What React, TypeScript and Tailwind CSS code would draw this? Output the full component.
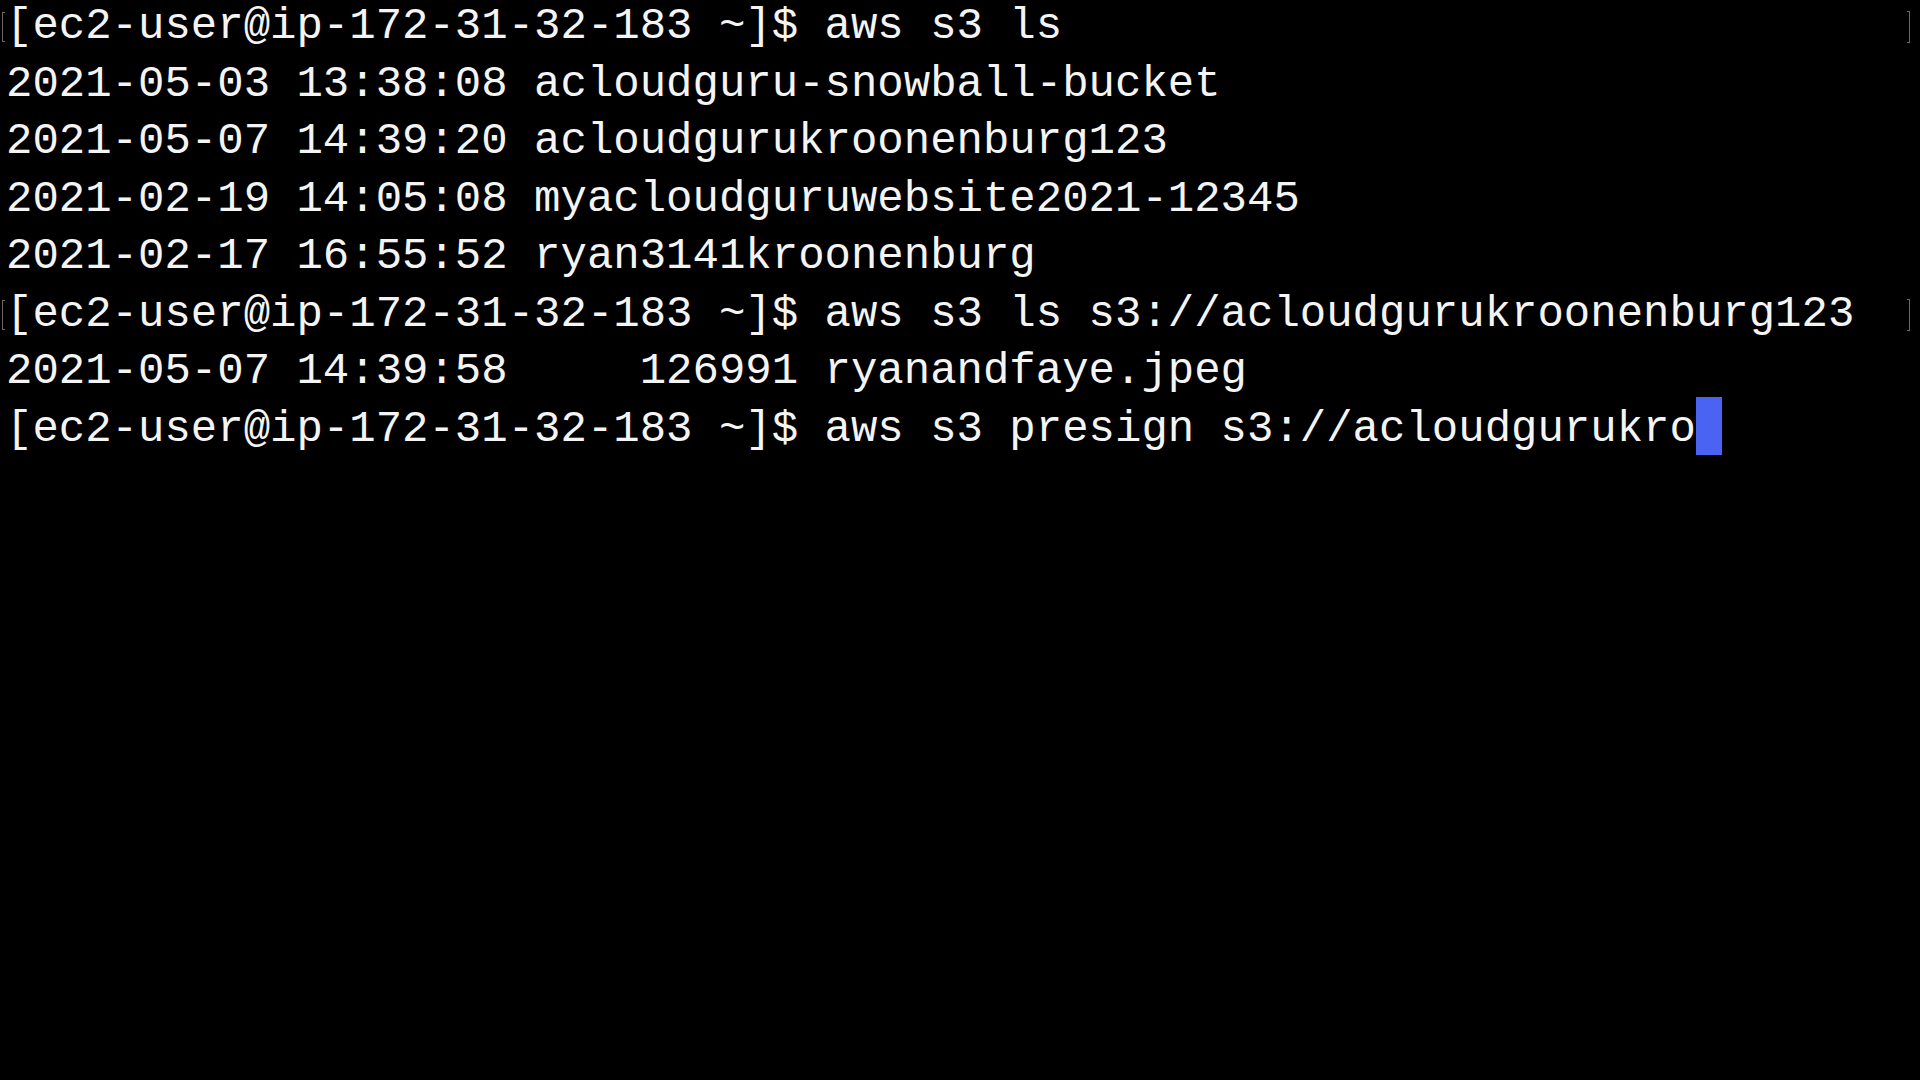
const lines: { text: string; mark?: boolean; cursor?: boolean }[] = [
  { text: "[ec2-user@ip-172-31-32-183 ~]$ aws s3 ls", mark: true },
  { text: "2021-05-03 13:38:08 acloudguru-snowball-bucket" },
  { text: "2021-05-07 14:39:20 acloudgurukroonenburg123" },
  { text: "2021-02-19 14:05:08 myacloudguruwebsite2021-12345" },
  { text: "2021-02-17 16:55:52 ryan3141kroonenburg" },
  { text: "[ec2-user@ip-172-31-32-183 ~]$ aws s3 ls s3://acloudgurukroonenburg123", mark: true },
  { text: "2021-05-07 14:39:58     126991 ryanandfaye.jpeg" },
  { text: "[ec2-user@ip-172-31-32-183 ~]$ aws s3 presign s3://acloudgurukro", cursor: true },
];

function Line({ text, mark, cursor }: { text: string; mark?: boolean; cursor?: boolean }) {
  return (
    <div className="flex h-[57.55px] items-center">
      <div className="w-[6px] shrink-0 flex items-center">
        {mark && <span className="ml-[2px] block h-[30px] w-[3px] border-y border-l border-[#6a6a6a]" />}
      </div>
      <div className="whitespace-pre leading-[57.55px]">
        {text}
        {cursor && <span className="inline-block h-[58px] w-[26px] bg-[#4b63f3] align-top -translate-y-[4px]" />}
      </div>
      <div className="ml-auto mr-[10px] flex items-center">
        {mark && <span className="block h-[32px] w-[3px] border-y border-r border-[#6a6a6a]" />}
      </div>
    </div>
  );
}

export default function App() {
  return (
    <div className="h-[1080px] w-[1920px] overflow-hidden bg-black text-[#f4f4f4] text-[44px] font-['Liberation_Mono',monospace]">
      <div className="-mt-[2px] flex flex-col">
        {lines.map((l, i) => (
          <Line key={i} {...l} />
        ))}
      </div>
    </div>
  );
}
